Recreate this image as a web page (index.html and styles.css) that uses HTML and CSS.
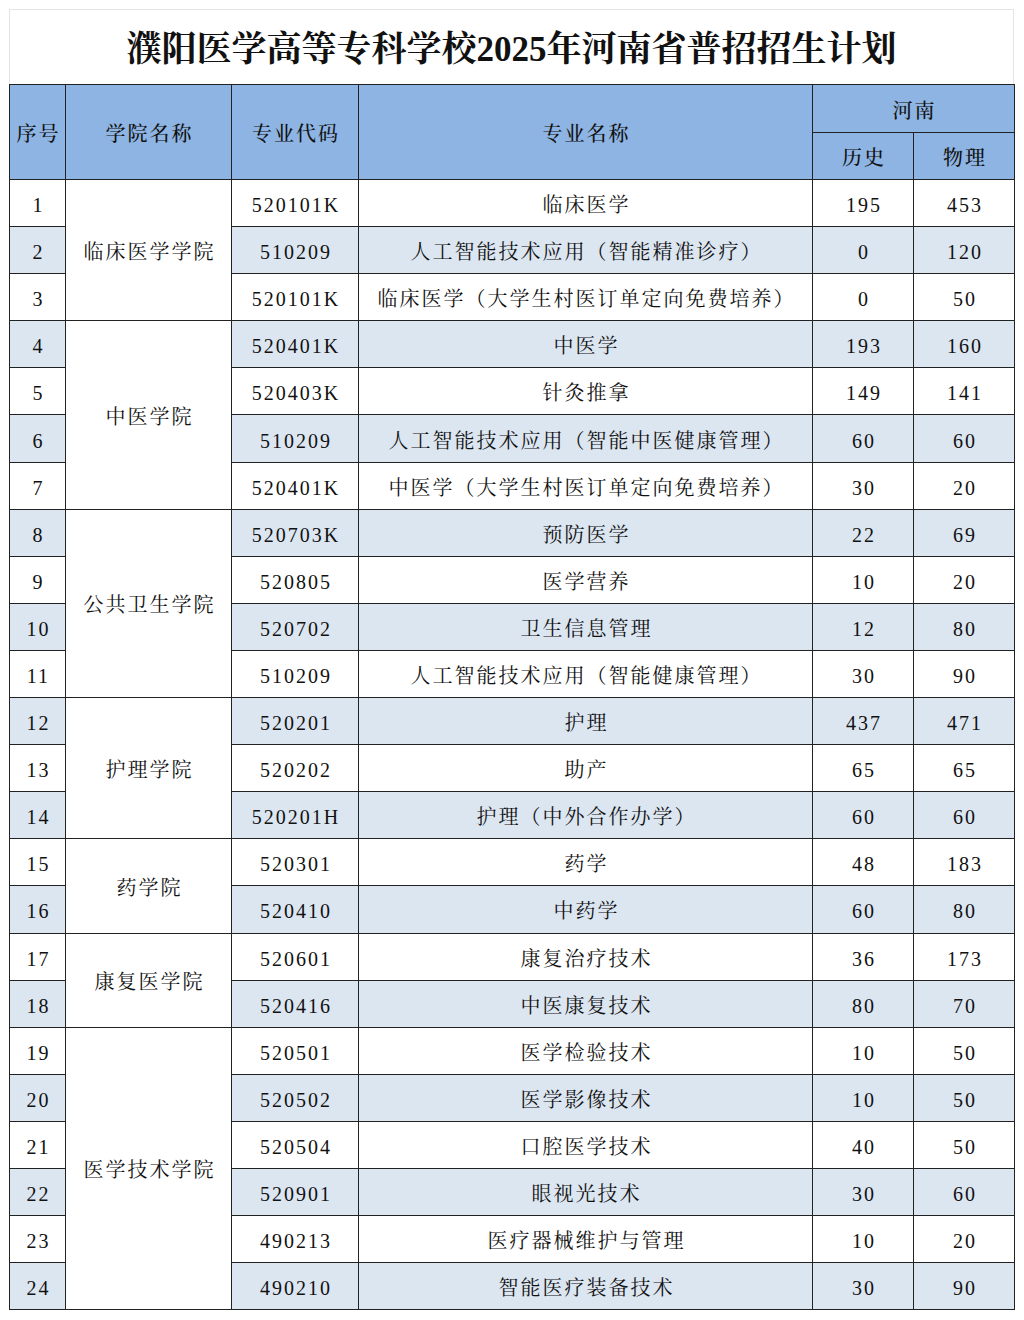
FILE: index.html
```html
<!DOCTYPE html>
<html lang="zh-CN">
<head>
<meta charset="utf-8">
<title>濮阳医学高等专科学校2025年河南省普招招生计划</title>
<link rel="stylesheet" href="styles.css">
</head>
<body>
<div class="sheet">
  <div class="title-box"><h1 class="title">濮阳医学高等专科学校2025年河南省普招招生计划</h1></div>
  <table class="plan">
    <colgroup>
      <col class="c-no"><col class="c-college"><col class="c-code"><col class="c-major"><col class="c-num"><col class="c-num">
    </colgroup>
    <thead>
      <tr class="h1">
        <th rowspan="2">序号</th>
        <th rowspan="2">学院名称</th>
        <th rowspan="2">专业代码</th>
        <th rowspan="2">专业名称</th>
        <th colspan="2">河南</th>
      </tr>
      <tr class="h2">
        <th>历史</th>
        <th>物理</th>
      </tr>
    </thead>
    <tbody>
      <tr><td>1</td><td class="college" rowspan="3">临床医学学院</td><td>520101K</td><td>临床医学</td><td>195</td><td>453</td></tr>
      <tr class="alt"><td>2</td><td>510209</td><td>人工智能技术应用（智能精准诊疗）</td><td>0</td><td>120</td></tr>
      <tr><td>3</td><td>520101K</td><td>临床医学（大学生村医订单定向免费培养）</td><td>0</td><td>50</td></tr>
      <tr class="alt"><td>4</td><td class="college" rowspan="4">中医学院</td><td>520401K</td><td>中医学</td><td>193</td><td>160</td></tr>
      <tr><td>5</td><td>520403K</td><td>针灸推拿</td><td>149</td><td>141</td></tr>
      <tr class="alt"><td>6</td><td>510209</td><td>人工智能技术应用（智能中医健康管理）</td><td>60</td><td>60</td></tr>
      <tr><td>7</td><td>520401K</td><td>中医学（大学生村医订单定向免费培养）</td><td>30</td><td>20</td></tr>
      <tr class="alt"><td>8</td><td class="college" rowspan="4">公共卫生学院</td><td>520703K</td><td>预防医学</td><td>22</td><td>69</td></tr>
      <tr><td>9</td><td>520805</td><td>医学营养</td><td>10</td><td>20</td></tr>
      <tr class="alt"><td>10</td><td>520702</td><td>卫生信息管理</td><td>12</td><td>80</td></tr>
      <tr><td>11</td><td>510209</td><td>人工智能技术应用（智能健康管理）</td><td>30</td><td>90</td></tr>
      <tr class="alt"><td>12</td><td class="college" rowspan="3">护理学院</td><td>520201</td><td>护理</td><td>437</td><td>471</td></tr>
      <tr><td>13</td><td>520202</td><td>助产</td><td>65</td><td>65</td></tr>
      <tr class="alt"><td>14</td><td>520201H</td><td>护理（中外合作办学）</td><td>60</td><td>60</td></tr>
      <tr><td>15</td><td class="college" rowspan="2">药学院</td><td>520301</td><td>药学</td><td>48</td><td>183</td></tr>
      <tr class="alt"><td>16</td><td>520410</td><td>中药学</td><td>60</td><td>80</td></tr>
      <tr><td>17</td><td class="college" rowspan="2">康复医学院</td><td>520601</td><td>康复治疗技术</td><td>36</td><td>173</td></tr>
      <tr class="alt"><td>18</td><td>520416</td><td>中医康复技术</td><td>80</td><td>70</td></tr>
      <tr><td>19</td><td class="college" rowspan="6">医学技术学院</td><td>520501</td><td>医学检验技术</td><td>10</td><td>50</td></tr>
      <tr class="alt"><td>20</td><td>520502</td><td>医学影像技术</td><td>10</td><td>50</td></tr>
      <tr><td>21</td><td>520504</td><td>口腔医学技术</td><td>40</td><td>50</td></tr>
      <tr class="alt"><td>22</td><td>520901</td><td>眼视光技术</td><td>30</td><td>60</td></tr>
      <tr><td>23</td><td>490213</td><td>医疗器械维护与管理</td><td>10</td><td>20</td></tr>
      <tr class="alt"><td>24</td><td>490210</td><td>智能医疗装备技术</td><td>30</td><td>90</td></tr>
    </tbody>
  </table>
</div>
</body>
</html>
```
FILE: styles.css
```css
html, body {
  margin: 0;
  padding: 0;
  background: #ffffff;
}
body {
  font-family: "Liberation Serif", "Noto Serif CJK SC", "Noto Sans CJK SC", serif;
  color: #111111;
}
.sheet {
  width: 1005px;
  padding: 9px 0 0 9px;
}
.title-box {
  height: 75px;
  border: 1px solid #e4e4e4;
  border-bottom: none;
  box-sizing: border-box;
  display: flex;
  align-items: center;
  justify-content: center;
}
.title {
  margin: 0;
  font-size: 35px;
  font-weight: 700;
  color: #111111;
  letter-spacing: 0;
  line-height: 1;
  padding-top: 4px;
}
.plan {
  width: 1005px;
  border-collapse: collapse;
  table-layout: fixed;
  font-size: 20px;
  letter-spacing: 2px;
}
.c-no { width: 56px; }
.c-college { width: 166px; }
.c-code { width: 127px; }
.c-major { width: 454px; }
.c-num { width: 101px; }
.plan th, .plan td {
  border: 1px solid #222222;
  text-align: center;
  vertical-align: middle;
  padding: 4px 0 0 2px;
  line-height: 1;
}
.plan th {
  background: #8db4e2;
  font-weight: 500;
  color: #111111;
}
.h1 { height: 48px; }
.h2 { height: 47px; }
.plan tbody tr { height: 47.1px; }
.plan td { background: #ffffff; }
.plan tr.alt td { background: #dce6f1; }
.plan tr td.college { background: #ffffff; }
```
